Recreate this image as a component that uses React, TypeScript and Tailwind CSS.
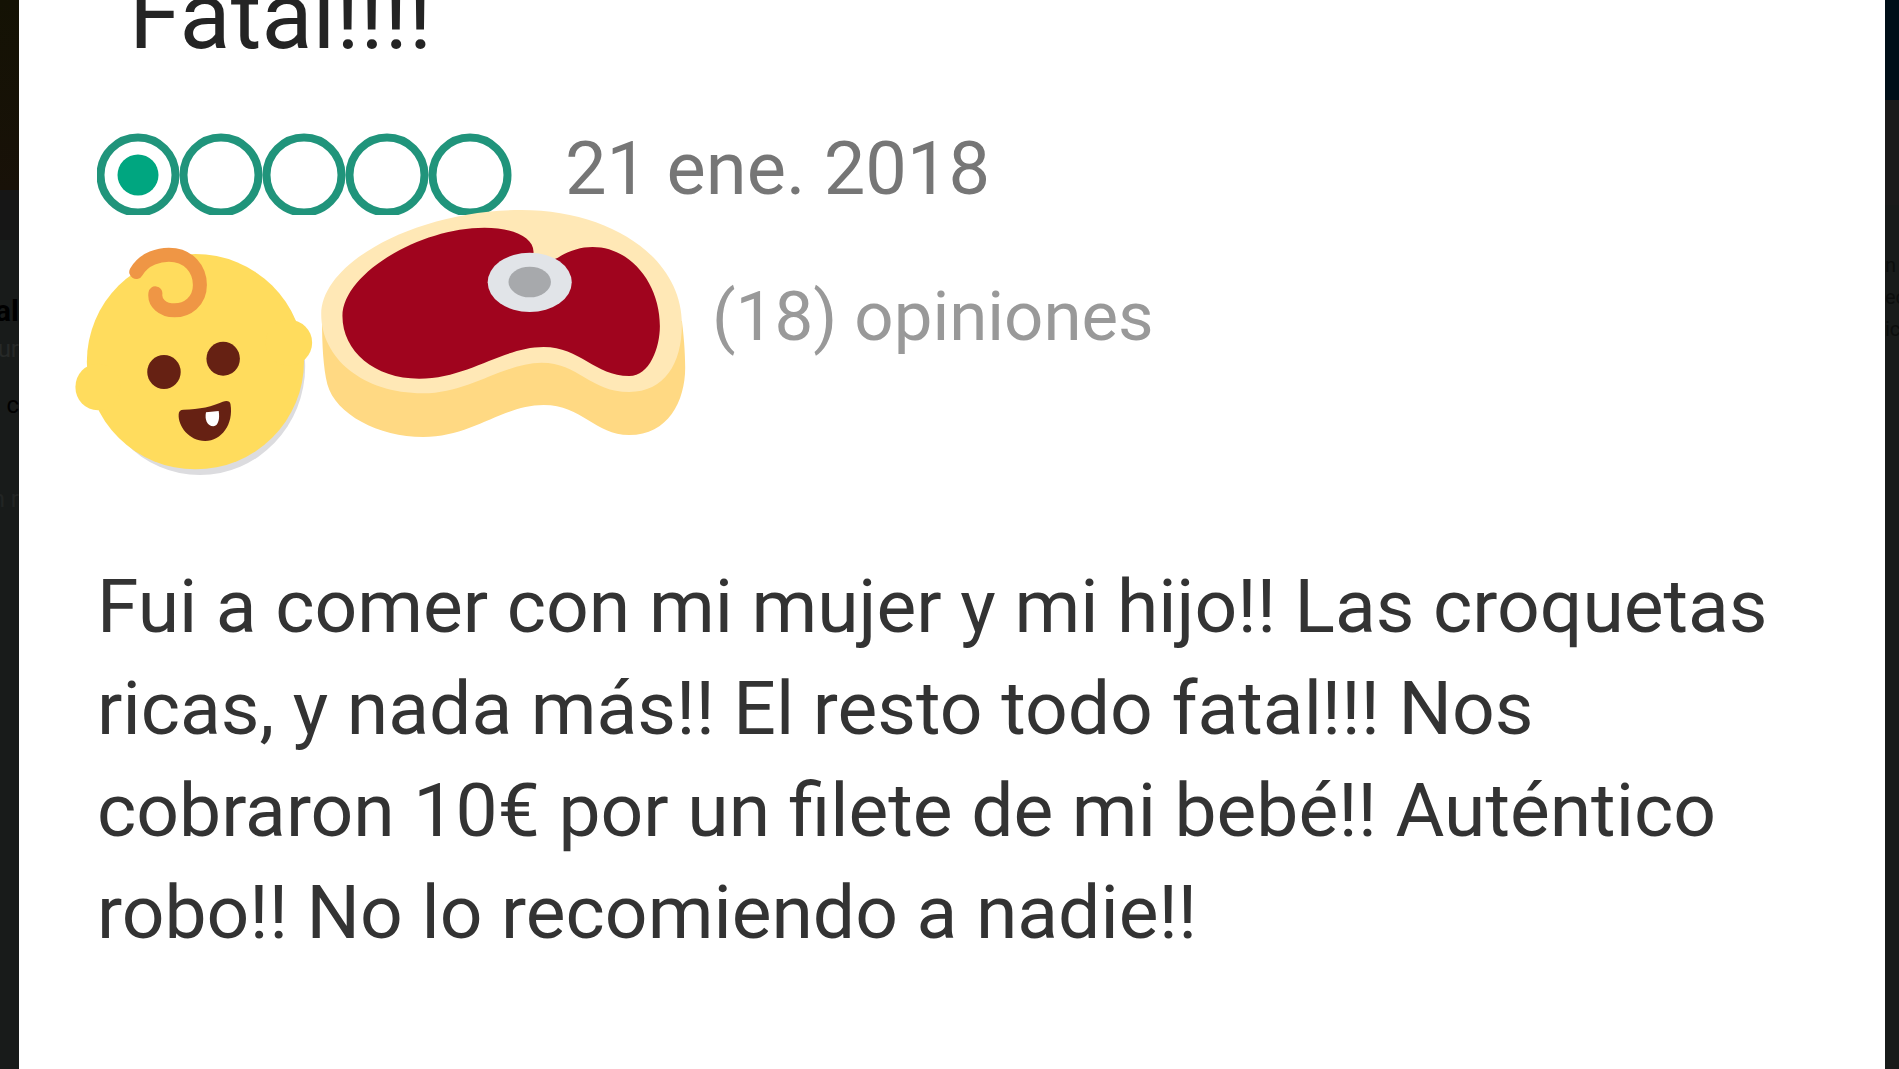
function Rating({ value }: { value: number }) {
  return (
    <svg
      className="h-[84px] w-[418px] shrink-0"
      viewBox="0 0 418 84"
      role="img"
      aria-label={`${value} de 5`}
    >
      <defs>
        <clipPath id="bubbles">
          <rect width="418" height="82" />
        </clipPath>
      </defs>
      <g clipPath="url(#bubbles)">
        {[0, 1, 2, 3, 4].map((i) => (
          <g key={i}>
            <circle cx={41 + i * 83} cy="42" r="37.5" fill="none" stroke="#20947b" strokeWidth="8" />
            {i < value && <circle cx={41 + i * 83} cy="42" r="20.5" fill="#00a680" />}
          </g>
        ))}
      </g>
    </svg>
  );
}

function Baby() {
  return (
    <svg
      className="mt-[37px] h-[228px] w-[240px] shrink-0"
      viewBox="36 138 588 684"
      preserveAspectRatio="none"
      role="img"
      aria-label="Bebé"
    >
      <ellipse cx="342" cy="495" rx="258" ry="327" fill="#dcdcdf" />
      <g fill="#ffdc5d">
        <ellipse cx="331" cy="482" rx="266" ry="323" />
        <ellipse cx="560" cy="425" rx="57" ry="69" />
        <ellipse cx="92" cy="558" rx="55" ry="70" />
      </g>
      <path
        d="M186 213C206 170 245 161 266 161C315 161 342 205 342 252C342 302 310 328 280 328C250 328 230 305 233 277"
        fill="none"
        stroke="#ef9645"
        strokeWidth="14"
        strokeLinecap="round"
        vectorEffect="non-scaling-stroke"
      />
      <g fill="#662113">
        <ellipse cx="254" cy="513" rx="41" ry="51" />
        <ellipse cx="399" cy="473" rx="41" ry="51" />
        <path d="M302 626C340 626 375 615 398 602Q415 596 417 610C425 670 395 720 355 720C315 720 288 675 290 640Q290 626 302 626Z" />
      </g>
      <path d="M357 634L388 630C391 650 388 675 375 676C360 676 353 655 357 634Z" fill="#fff" />
    </svg>
  );
}

function Steak() {
  return (
    <svg
      className="h-[228px] w-[366px] shrink-0"
      viewBox="637 27 897 684"
      preserveAspectRatio="none"
      role="img"
      aria-label="Filete"
    >
      <path
        d="M642 360C642 430 645 500 655 550C675 640 780 708 890 708C1010 708 1085 612 1185 612C1280 612 1310 702 1395 702C1490 702 1532 600 1532 500C1532 450 1528 400 1524 360Z"
        fill="#ffd983"
      />
      <path
        d="M640 340C640 180 880 27 1130 27C1350 27 1524 170 1524 370C1524 490 1480 573 1395 573C1300 573 1270 485 1180 485C1090 485 1000 577 890 577C740 577 640 470 640 340Z"
        fill="#ffe8b6"
      />
      <path
        d="M692 345C692 220 880 80 1040 80C1110 80 1165 110 1160 158L1180 190L1220 170C1245 150 1275 138 1305 138C1400 138 1470 250 1470 375C1470 440 1445 525 1395 525C1310 525 1275 438 1185 438C1085 438 1000 533 880 533C770 533 692 450 692 345Z"
        fill="#a0041e"
      />
      <ellipse cx="1151" cy="244" rx="103" ry="89" fill="#e1e4e8" />
      <ellipse cx="1151" cy="243" rx="52" ry="46" fill="#a7a9ac" />
    </svg>
  );
}

export default function App() {
  return (
    <div className="flex min-h-screen bg-[#181b1a] font-[Roboto,sans-serif]">
      <aside aria-hidden="true" className="flex w-[19px] shrink-0 flex-col overflow-hidden whitespace-nowrap">
        <div className="h-[190px] bg-linear-to-b from-[#141204] to-[#181108]" />
        <div className="h-[50px] bg-[#161616]" />
        <div className="mt-[53px] flex h-8 justify-end text-3xl font-bold text-black">al</div>
        <div className="mt-2 flex justify-end text-2xl text-[#262928]">ur</div>
        <div className="mt-6 flex justify-end text-2xl text-black">c</div>
        <div className="mt-[62px] flex justify-end text-2xl text-[#222524]">n r</div>
      </aside>

      <main className="min-w-0 flex-1 overflow-hidden bg-white pr-[72px] pl-[78px]">
        <h1 className="-mt-10 ml-0.5 text-[94px] leading-[112px] text-[#242424]">"Fatal!!!!"</h1>

        <div className="mt-[61px] flex items-start gap-[50px]">
          <Rating value={1} />
          <time dateTime="2018-01-21" className="text-[74px] leading-[72px] text-[#767676]">
            21 ene. 2018
          </time>
        </div>

        <div className="-mt-[7px] -ml-[22px] flex items-start gap-[5px]">
          <Baby />
          <Steak />
          <p className="mt-[66px] ml-[21px] text-[69px] leading-[82px] text-[#999999]">(18) opiniones</p>
        </div>

        <p className="mt-[80px] text-[75px] leading-[102px] text-[#333333]">
          Fui a comer con mi mujer y mi hijo!! Las croquetas ricas, y nada más!! El resto todo fatal!!! Nos
          cobraron 10€ por un filete de mi bebé!! Auténtico robo!! No lo recomiendo a nadie!!
        </p>
      </main>

      <aside aria-hidden="true" className="flex w-[14px] shrink-0 flex-col overflow-hidden text-xl leading-8 text-[#0c0e0d]">
        <div className="h-[100px] bg-[#000f18]" />
        <div className="h-[105px] bg-[#1b1b1b]" />
        <div className="mt-11">n</div>
        <div>ec</div>
        <div>ic</div>
      </aside>
    </div>
  );
}
